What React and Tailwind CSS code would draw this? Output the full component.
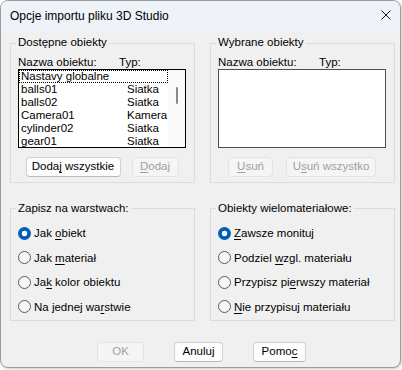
import React from 'react'

const U = ({ children }) => (
  <span className="underline decoration-1 underline-offset-[2px]">{children}</span>
)

const Button = ({ children, width, disabled }) => (
  <div
    className={`${width} h-[20px] flex items-center justify-center rounded-[4px] border ${
      disabled
        ? 'bg-[#f5f5f5] border-[#e3e3e3] text-[#a0a0a0]'
        : 'bg-[#fdfdfd] border-[#d0d0d0] border-b-[#b9b9b9] text-black'
    }`}
  >
    <span className="whitespace-pre">{children}</span>
  </div>
)

const Radio = ({ checked, children }) => (
  <div className="h-[24.5px] flex items-center">
    <svg width="13" height="13" viewBox="0 0 13 13" className="shrink-0">
      {checked ? (
        <>
          <circle cx="6.5" cy="6.5" r="6.5" fill="#005fb8" />
          <circle cx="6.5" cy="6.5" r="2.7" fill="#ffffff" />
        </>
      ) : (
        <circle cx="6.5" cy="6.5" r="6" fill="#f7f7f7" stroke="#5b5b5b" strokeWidth="1" />
      )}
    </svg>
    <span className="ml-[3px] leading-[14px]">{children}</span>
  </div>
)

const GroupTitle = ({ children, offset }) => (
  <div className={`${offset} -ml-[2px] w-fit bg-[#f0f0f0] px-[2px] h-[14px] leading-[14px]`}>
    {children}
  </div>
)

const objects = [
  { name: 'balls01', type: 'Siatka' },
  { name: 'balls02', type: 'Siatka' },
  { name: 'Camera01', type: 'Kamera' },
  { name: 'cylinder02', type: 'Siatka' },
  { name: 'gear01', type: 'Siatka' },
]

export default function App() {
  return (
    <div className="w-[402px] h-[370px] bg-white font-['Liberation_Sans',Arial,sans-serif] text-[11.5px] text-black">
      <div className="w-[401px] h-[368px] rounded-[8px] border border-[#9c9c9c] bg-[#f0f0f0] overflow-hidden shadow-[1px_1px_3px_rgba(0,0,0,0.22)] flex flex-col">
        {/* Title bar */}
        <div className="h-[30px] shrink-0 bg-[#eef3f9] flex items-center justify-between pl-[9px] pr-[9px]">
          <span className="text-[12px] leading-[16px]">Opcje importu pliku 3D Studio</span>
          <svg width="10" height="10" viewBox="0 0 10 10" className="-mt-[2px]">
            <path d="M0.5 0.5 L9.5 9.5 M9.5 0.5 L0.5 9.5" stroke="#1b1b1b" strokeWidth="1" fill="none" />
          </svg>
        </div>

        {/* Body */}
        <div className="pl-[9px] pt-[12px]">
          <div className="flex gap-[15px]">
            {/* Dostępne obiekty */}
            <div className="w-[185px] h-[140px] border border-[#dcdcdc] pl-[7px] pr-[8px]">
              <GroupTitle offset="-mt-[9px]">Dostępne obiekty</GroupTitle>
              <div className="mt-[6px] h-[14px] leading-[14px] flex">
                <span className="w-[101px]">Nazwa obiektu:</span>
                <span>Typ:</span>
              </div>
              <div className="h-[79px] border border-black bg-white overflow-hidden flex">
                <div className="w-[149px]">
                  <div className="h-[13px] leading-[11px] border border-dotted border-black pl-[1px]">
                    Nastavy globalne
                  </div>
                  {objects.map((o) => (
                    <div key={o.name} className="h-[13px] leading-[13px] flex pl-[2px]">
                      <span className="w-[106px]">{o.name}</span>
                      <span>{o.type}</span>
                    </div>
                  ))}
                </div>
                <div className="flex-1 bg-[#fafafa]">
                  <div className="ml-[8px] mt-[17px] w-[2px] h-[17px] rounded-full bg-[#8a8a8a]" />
                </div>
              </div>
              <div className="mt-[9px] flex justify-center gap-[11px]">
                <Button width="w-[95px]">
                  Doda<U>j</U> wszystkie
                </Button>
                <Button width="w-[47px]" disabled>
                  <U>D</U>odaj
                </Button>
              </div>
            </div>

            {/* Wybrane obiekty */}
            <div className="w-[185px] h-[140px] border border-[#dcdcdc] pl-[7px] pr-[8px]">
              <GroupTitle offset="-mt-[9px]">Wybrane obiekty</GroupTitle>
              <div className="mt-[6px] h-[14px] leading-[14px] flex">
                <span className="w-[101px]">Nazwa obiektu:</span>
                <span>Typ:</span>
              </div>
              <div className="h-[79px] border border-[#4e4e4e] bg-white" />
              <div className="mt-[9px] flex justify-center gap-[13px]">
                <Button width="w-[45px]" disabled>
                  <U>U</U>suń
                </Button>
                <Button width="w-[90px]" disabled>
                  U<U>s</U>uń wszystko
                </Button>
              </div>
            </div>
          </div>

          <div className="mt-[25px] flex gap-[15px]">
            {/* Zapisz na warstwach */}
            <div className="w-[185px] h-[113px] border border-[#dcdcdc] pl-[7px] pr-[8px]">
              <GroupTitle offset="-mt-[8px]">Zapisz na warstwach:</GroupTitle>
              <div className="mt-[6px] flex flex-col">
                <Radio checked>
                  Jak <U>o</U>biekt
                </Radio>
                <Radio>
                  Jak <U>m</U>ateriał
                </Radio>
                <Radio>
                  Ja<U>k</U> kolor obiektu
                </Radio>
                <Radio>
                  Na jednej wa<U>r</U>stwie
                </Radio>
              </div>
            </div>

            {/* Obiekty wielomateriałowe */}
            <div className="w-[185px] h-[113px] border border-[#dcdcdc] pl-[7px] pr-[8px]">
              <GroupTitle offset="-mt-[8px]">Obiekty wielomateriałowe:</GroupTitle>
              <div className="mt-[6px] flex flex-col">
                <Radio checked>
                  <U>Z</U>awsze monituj
                </Radio>
                <Radio>
                  Podziel <U>w</U>zgl. materiału
                </Radio>
                <Radio>
                  Przypisz pi<U>e</U>rwszy materiał
                </Radio>
                <Radio>
                  <U>N</U>ie przypisuj materiału
                </Radio>
              </div>
            </div>
          </div>

          {/* Footer buttons */}
          <div className="mt-[21px] ml-[87px] flex gap-[30px]">
            <Button width="w-[47px]" disabled>
              OK
            </Button>
            <Button width="w-[49px]">Anuluj</Button>
            <Button width="w-[53px]">
              Pomo<U>c</U>
            </Button>
          </div>
        </div>
      </div>
    </div>
  )
}
